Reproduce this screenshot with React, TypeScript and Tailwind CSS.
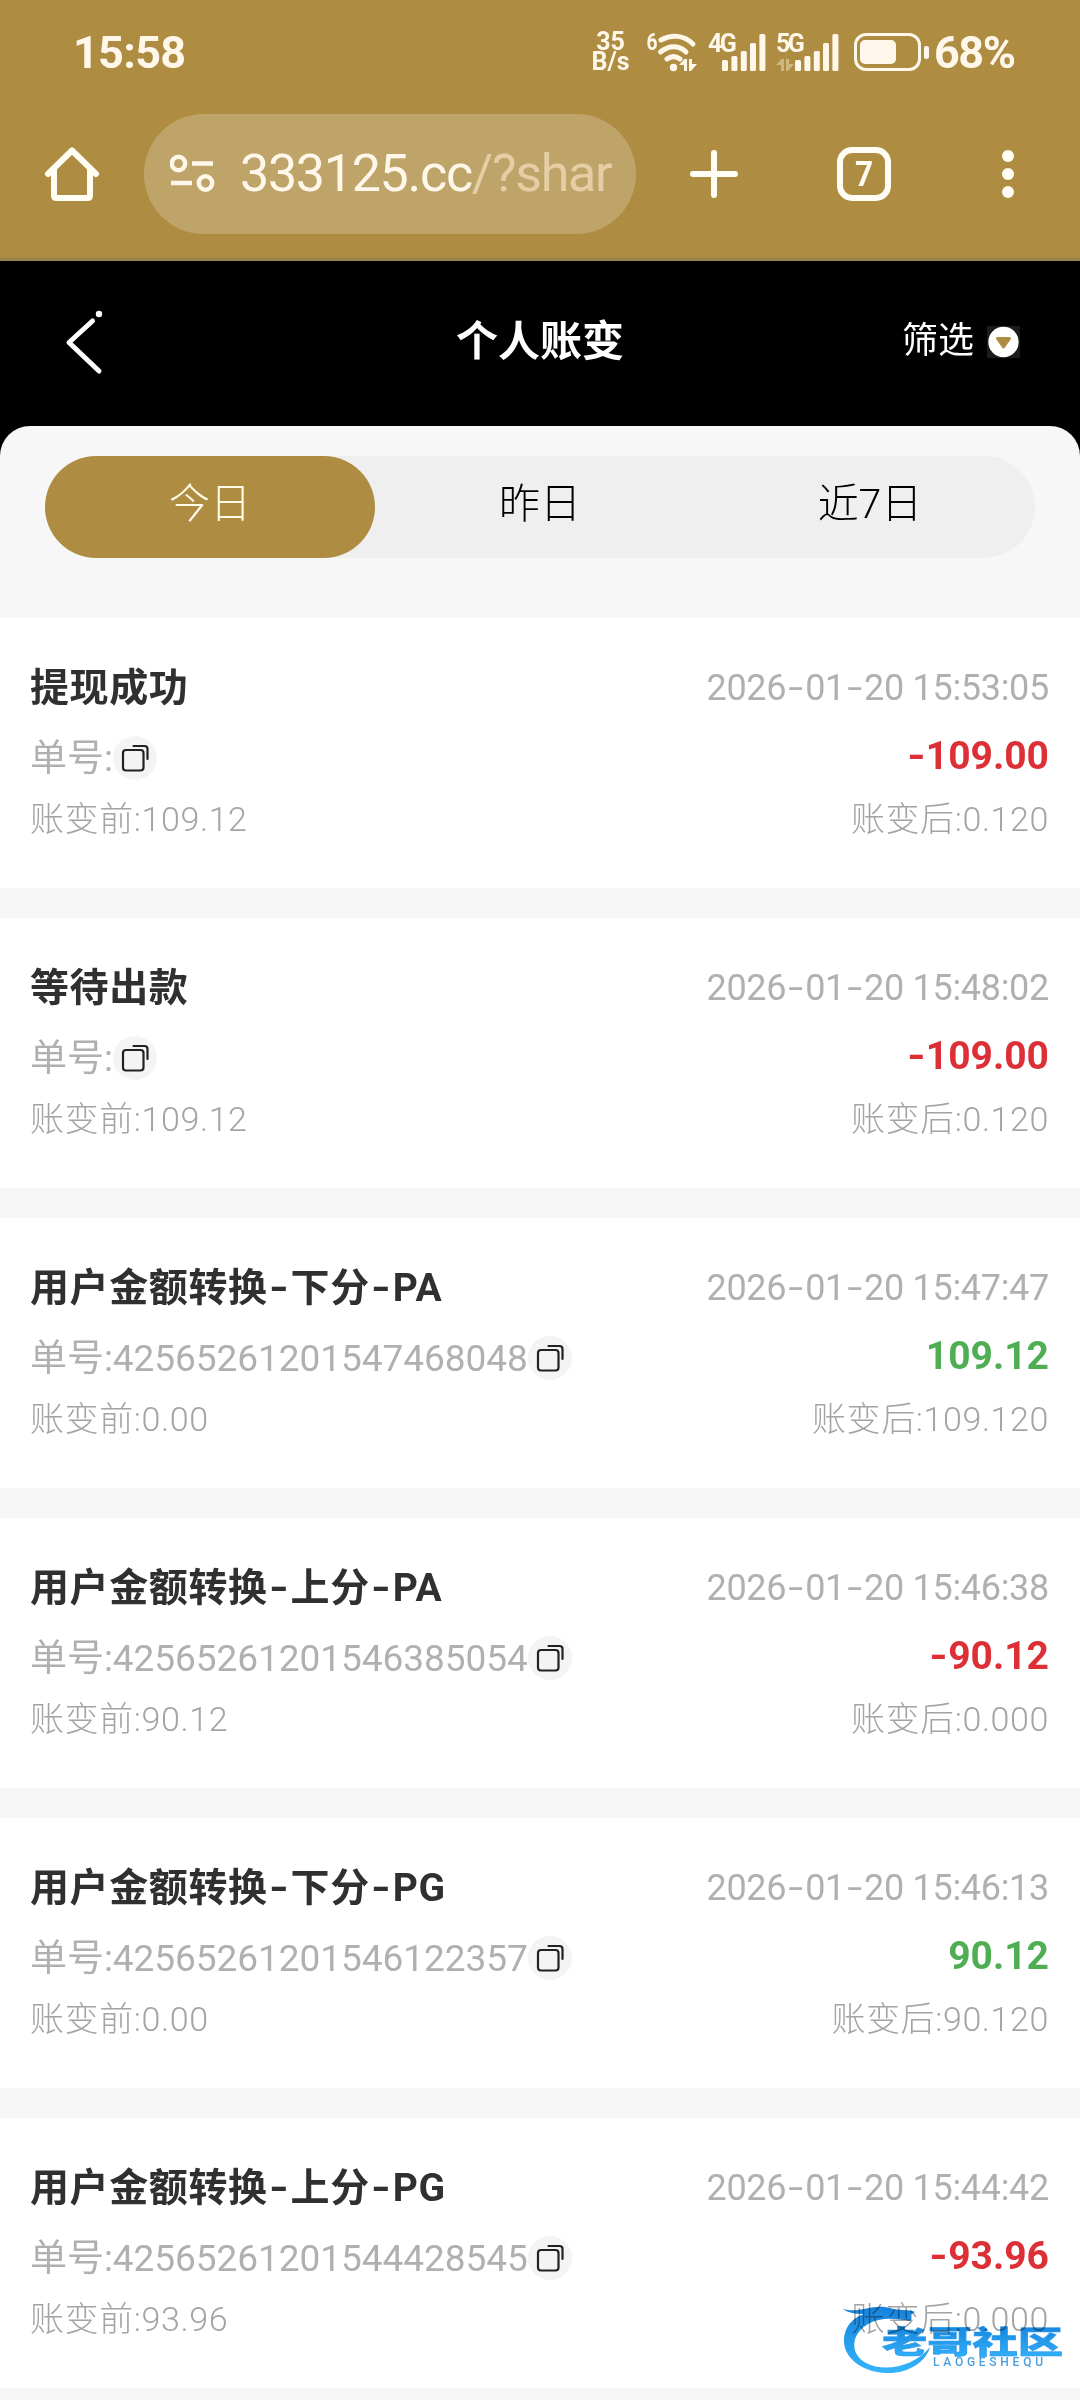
import React from "react";

const tabs = ["今日", "昨日", "近7日"];

const records = [
  { title: "提现成功", no: "", time: "2026-01-20 15:53:05", amount: "-109.00", before: "109.12", after: "0.120" },
  { title: "等待出款", no: "", time: "2026-01-20 15:48:02", amount: "-109.00", before: "109.12", after: "0.120" },
  { title: "用户金额转换-下分-PA", no: "42565261201547468048", time: "2026-01-20 15:47:47", amount: "109.12", before: "0.00", after: "109.120" },
  { title: "用户金额转换-上分-PA", no: "42565261201546385054", time: "2026-01-20 15:46:38", amount: "-90.12", before: "90.12", after: "0.000" },
  { title: "用户金额转换-下分-PG", no: "42565261201546122357", time: "2026-01-20 15:46:13", amount: "90.12", before: "0.00", after: "90.120" },
  { title: "用户金额转换-上分-PG", no: "42565261201544428545", time: "2026-01-20 15:44:42", amount: "-93.96", before: "93.96", after: "0.000" },
];

// gives every hyphen in the text a wider cell
function Dashed({ text, dash }: { text: string; dash: string }) {
  return (
    <>
      {text.split("-").map((part, i) => (
        <React.Fragment key={i}>
          {i > 0 && <span className={dash}>-</span>}
          {part}
        </React.Fragment>
      ))}
    </>
  );
}

function Signal() {
  return (
    <svg width="44" height="37" viewBox="0 0 44 37" fill="#fff8ea">
      <rect x="0" y="26" width="6" height="11" rx="1.5" />
      <rect x="9.4" y="22" width="6" height="15" rx="1.5" />
      <rect x="18.8" y="17" width="6" height="20" rx="1.5" />
      <rect x="28" y="9" width="6" height="28" rx="1.5" />
      <rect x="37.4" y="0" width="6" height="37" rx="1.5" />
    </svg>
  );
}

function StatusBar() {
  return (
    <div className="flex h-[104px] items-center pl-[73px] text-[#fff8ea]">
      <div className="w-[517px] text-[45px] leading-none font-bold tracking-[-0.7px]">15:58</div>
      <div className="w-[41px] text-center text-[25px] leading-[20px] font-bold">
        <div>35</div>
        <div>B/s</div>
      </div>
      <svg className="ml-[15px] overflow-visible" width="54" height="42" viewBox="0 0 54 42" fill="none">
        <text x="0.500" y="19" fontSize="23" fontWeight="700" fill="#fff8ea" textLength="11" lengthAdjust="spacingAndGlyphs">6</text>
        <g stroke="#fff8ea" strokeWidth="5" strokeLinecap="round">
          <path d="M15 9C26 3 38 4 47 13" />
          <path d="M14.500 21C23 14 33 14 40 21" />
          <path d="M21 28C25 25 30 25 34 28" />
        </g>
        <circle cx="27.500" cy="36.500" r="3.700" fill="#fff8ea" />
        <path d="M33 34L38.500 28H41V40H38V34ZM43 28H46V33H51L45 40H43Z" fill="#fff8ea" />
      </svg>
      <div className="relative ml-[8px] flex h-[37px] w-[58px] justify-end">
        <span className="absolute top-[-3px] left-0 text-[25px] leading-none font-bold tracking-[-2.5px]">4G</span>
        <Signal />
      </div>
      <div className="relative ml-[10px] flex h-[37px] w-[63px] justify-end">
        <span className="absolute top-[-3px] left-0 text-[25px] leading-none font-bold tracking-[-2.5px]">5G</span>
        <svg className="absolute top-[25px] left-0" width="18" height="12" viewBox="33 28 18 12" fill="#cdb680">
          <path d="M33 34L38.500 28H41V40H38V34ZM43 28H46V33H51L45 40H43Z" />
        </svg>
        <Signal />
      </div>
      <div className="ml-[15px] flex h-[38px] w-[67px] items-center rounded-[12px] border-[3px] border-[#fff8ea] pl-[3px]">
        <div className="h-[24px] w-[36px] rounded-[5px] bg-[#fff8ea]" />
      </div>
      <div className="ml-[3px] h-[13px] w-[5px] rounded-[2px] bg-[#fff8ea]" />
      <div className="ml-[5px] text-[45px] leading-none font-bold tracking-[-1.5px]">68%</div>
    </div>
  );
}

function AddressBar() {
  return (
    <div className="flex h-[140px] items-center">
      <svg className="ml-[42px]" width="60" height="60" viewBox="0 0 60 60" fill="none" stroke="#fffdf4" strokeWidth="6" strokeLinecap="round" strokeLinejoin="round">
        <path d="M6 30L30 6.500L54 30" />
        <path d="M12 25V51.500Q12 54 14.500 54H45.500Q48 54 48 51.500V25" />
      </svg>
      <div className="ml-[42px] flex h-[120px] w-[492px] items-center rounded-full bg-[#bfa46a] pl-[26px]">
        <svg width="45" height="40" viewBox="0 0 45 40" fill="none" stroke="#fff8ea" strokeWidth="4.500">
          <circle cx="8.500" cy="9.500" r="6.700" />
          <path d="M22 9.500H43M1 29H22" />
          <circle cx="35.500" cy="29" r="6.700" />
        </svg>
        <div className="ml-[25px] text-[52px] leading-none tracking-[-1.3px] whitespace-nowrap text-[#fff8ea]">
          333125.cc<span className="text-[#e5cea4]">/?shar</span>
        </div>
      </div>
      <svg className="ml-[53px]" width="50" height="50" viewBox="0 0 50 50" stroke="#fffdf4" strokeWidth="6" strokeLinecap="round">
        <path d="M25 4V46M4 25H46" />
      </svg>
      <div className="ml-[98px] flex h-[54px] w-[54px] items-center justify-center rounded-[15px] border-[6px] border-[#fffdf4] text-[35px] leading-none font-bold text-[#fffdf4]">
        <span className="scale-x-90">7</span>
      </div>
      <div className="ml-[111px] flex flex-col gap-[6px]">
        <div className="h-[12px] w-[12px] rounded-full bg-[#fffdf4]" />
        <div className="h-[12px] w-[12px] rounded-full bg-[#fffdf4]" />
        <div className="h-[12px] w-[12px] rounded-full bg-[#fffdf4]" />
      </div>
    </div>
  );
}

function PageHeader() {
  return (
    <div className="grid h-[165px] grid-cols-3 items-center bg-black pr-[60px] pb-[4px] pl-[60px] text-white">
      <svg className="mb-[2px]" width="50" height="70" viewBox="60 306 50 70" fill="none" stroke="#fff" strokeWidth="5" strokeLinecap="round" strokeLinejoin="round">
        <path d="M92.500 321L69 342.500L99 371" />
        <circle cx="99" cy="314" r="3.200" fill="#fff" stroke="none" />
      </svg>
      <div className="text-center text-[42px] leading-none font-bold">个人账变</div>
      <div className="flex items-center justify-end">
        <span className="mb-[2px] text-[36px] leading-none">筛选</span>
        <svg className="ml-[13px]" width="33" height="32" viewBox="0 0 33 32">
          <rect width="33" height="32" fill="#1b1b1b" />
          <circle cx="16.500" cy="16" r="15.200" fill="#fff" />
          <path d="M10.500 12.500H22.500L16.500 21Z" fill="#ae8c42" stroke="#ae8c42" strokeWidth="3" strokeLinejoin="round" />
        </svg>
      </div>
    </div>
  );
}

function CopyIcon() {
  return (
    <div className="flex h-[44px] w-[44px] items-center justify-center rounded-full bg-[#f4f4f4]">
      <svg width="28" height="28" viewBox="0 0 28 28" fill="none" stroke="#222" strokeWidth="2.200" strokeLinecap="round">
        <rect x="2" y="6" width="20.500" height="20.500" rx="3" />
        <path d="M12.500 2H23.500Q26.500 2 26.500 5V15" />
      </svg>
    </div>
  );
}

// watermark in the bottom corner of the list
function Watermark() {
  return (
    <svg className="absolute right-0 bottom-[17px] mix-blend-multiply" width="240" height="80" viewBox="840 2303 240 80">
      <defs>
        <linearGradient id="wm" x1="0" y1="0" x2="0" y2="1">
          <stop offset="0" stopColor="#1683dc" />
          <stop offset="1" stopColor="#35b4fb" />
        </linearGradient>
      </defs>
      <path
        d="M843 2309C860 2314 872 2303 890 2308C900 2311 908 2309 915 2312C908 2315 914 2317 910 2321C895 2318 880 2317 868 2324C850 2335 850 2354 866 2363C885 2373 915 2366 930 2347C926 2362 908 2374 886 2373C862 2372 844 2358 844 2341C844 2326 854 2317 864 2314C856 2314 848 2313 843 2309Z"
        fill="url(#wm)"
      />
      <text x="882" y="2353" fontSize="31" fontWeight="900" fill="url(#wm)" stroke="#2a9aee" strokeWidth="0.600" textLength="181" lengthAdjust="spacingAndGlyphs">
        老哥社区
      </text>
      <text x="933" y="2366" fontSize="12" fontWeight="500" fill="#4a9fe0" textLength="110">LAOGESHEQU</text>
    </svg>
  );
}

export default function App() {
  return (
    <div className="relative h-[2400px] w-[1080px] overflow-hidden bg-[#f6f6f6] font-[Roboto,'Noto_Sans_CJK_SC',sans-serif]">
      <div className="h-[261px] border-b-[3px] border-[#9a8150] bg-[#ae8c42]">
        <StatusBar />
        <AddressBar />
      </div>
      <PageHeader />
      <div className="bg-black">
        <div className="h-[192px] rounded-t-[30px] bg-[#f7f7f7] px-[45px] pt-[30px]">
          <div className="grid h-[102px] grid-cols-3 rounded-full bg-[#efefef]">
            {tabs.map((tab, i) => (
              <div
                key={tab}
                className={
                  i === 0
                    ? "flex items-center justify-center rounded-full bg-[#ae8c42] pb-[6px] text-[41px] leading-none font-light text-[#fffbe8]"
                    : "flex items-center justify-center pb-[6px] text-[41px] leading-none font-light text-black"
                }
              >
                {tab}
              </div>
            ))}
          </div>
        </div>
      </div>
      <div className="flex flex-col gap-[30px]">
        {records.map((item) => (
          <div key={item.time} className="h-[270px] bg-white pt-[46px] pr-[31px] pl-[30px]">
            <div className="flex h-[48px] items-center justify-between">
              <div className="text-[39px] leading-none font-bold tracking-[0.6px] text-[#303030]">
                <Dashed text={item.title} dash="inline-block w-[23px] scale-x-130 text-center" />
              </div>
              <div className="text-[36px] leading-none tracking-[-0.3px] text-[#b0b0b0]">
                <Dashed text={item.time} dash="inline-block w-[19px] scale-x-150 text-center" />
              </div>
            </div>
            <div className="mt-[24px] flex h-[44px] items-center justify-between">
              <div className="flex items-center text-[37px] leading-none tracking-[-0.05px] text-[#b0b0b0]">
                单号:{item.no}
                <CopyIcon />
              </div>
              <div
                className={
                  item.amount.startsWith("-")
                    ? "mb-[3px] text-[39px] leading-none font-bold text-[#dc2f36]"
                    : "mb-[3px] text-[39px] leading-none font-bold text-[#4fae54]"
                }
              >
                <Dashed text={item.amount} dash="inline-block w-[19px] scale-x-120 text-center" />
              </div>
            </div>
            <div className="mt-[17px] flex h-[44px] items-center justify-between text-[34px] leading-none font-light tracking-[0.6px] text-[#a4a4a4]">
              <div>账变前:{item.before}</div>
              <div>账变后:{item.after}</div>
            </div>
          </div>
        ))}
      </div>
      <Watermark />
    </div>
  );
}
